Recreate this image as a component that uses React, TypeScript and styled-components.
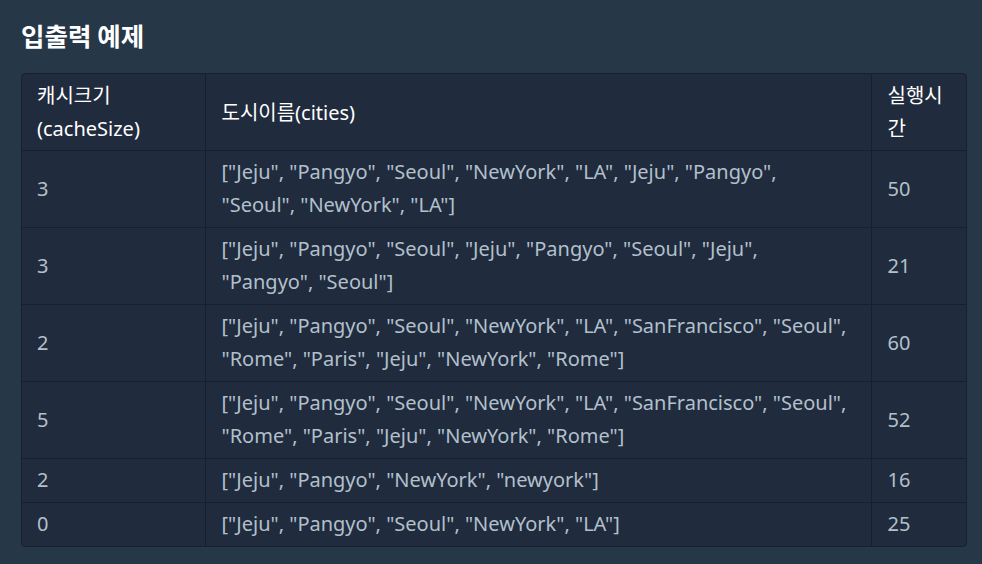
import React from "react";
import styled, { createGlobalStyle } from "styled-components";

const GlobalStyle = createGlobalStyle`
  html, body { margin: 0; padding: 0; background: #263747; }
  body { font-family: "Noto Sans", "Noto Sans CJK KR", sans-serif; }
`;

const Page = styled.div`
  width: 982px;
  height: 564px;
  box-sizing: border-box;
  padding: 16px 15px 0 21px;
  background: #263747;
  overflow: hidden;
`;

const Title = styled.h5`
  margin: 0 0 19px 0;
  font-size: 25.5px;
  line-height: 38px;
  font-weight: 700;
  color: #ffffff;
  font-family: "Noto Sans CJK KR", sans-serif;
`;

const TableWrap = styled.div`
  border: 1px solid #172030;
  border-radius: 4px;
  overflow: hidden;
  background: #202b3d;
`;

const Table = styled.table`
  width: 100%;
  border-collapse: collapse;
  table-layout: fixed;
  font-size: 20px;
  line-height: 33px;
`;

const Col = styled.col<{ $w: number }>`
  width: ${(p) => p.$w}px;
`;

const Th = styled.th`
  text-align: left;
  font-weight: 400;
  color: #ffffff;
  padding: 5px 16px 5px 16px;
  border-right: 1px solid #172030;
  border-bottom: 1px solid #172030;
  vertical-align: middle;
  &:first-child { padding-left: 15px; }
  &:last-child { border-right: none; }
`;

const Td = styled.td`
  color: #b2c0cc;
  padding: 4px 20px 6px 16px;
  border-right: 1px solid #172030;
  border-bottom: 1px solid #172030;
  vertical-align: middle;
  &:first-child { padding-left: 15px; }
  &:last-child { border-right: none; }
`;

const Tr = styled.tr`
  &:last-child td { border-bottom: none; }
`;

const rows: [string, string, string][] = [
  ["3", '["Jeju", "Pangyo", "Seoul", "NewYork", "LA", "Jeju", "Pangyo", "Seoul", "NewYork", "LA"]', "50"],
  ["3", '["Jeju", "Pangyo", "Seoul", "Jeju", "Pangyo", "Seoul", "Jeju", "Pangyo", "Seoul"]', "21"],
  ["2", '["Jeju", "Pangyo", "Seoul", "NewYork", "LA", "SanFrancisco", "Seoul", "Rome", "Paris", "Jeju", "NewYork", "Rome"]', "60"],
  ["5", '["Jeju", "Pangyo", "Seoul", "NewYork", "LA", "SanFrancisco", "Seoul", "Rome", "Paris", "Jeju", "NewYork", "Rome"]', "52"],
  ["2", '["Jeju", "Pangyo", "NewYork", "newyork"]', "16"],
  ["0", '["Jeju", "Pangyo", "Seoul", "NewYork", "LA"]', "25"],
];

export default function App() {
  return (
    <Page>
      <GlobalStyle />
      <Title>입출력 예제</Title>
      <TableWrap>
        <Table>
          <colgroup>
            <Col $w={183} />
            <Col $w={666} />
            <Col $w={97} />
          </colgroup>
          <thead>
            <tr>
              <Th>캐시크기 (cacheSize)</Th>
              <Th>도시이름(cities)</Th>
              <Th>실행시간</Th>
            </tr>
          </thead>
          <tbody>
            {rows.map((r, i) => (
              <Tr key={i}>
                <Td>{r[0]}</Td>
                <Td>{r[1]}</Td>
                <Td>{r[2]}</Td>
              </Tr>
            ))}
          </tbody>
        </Table>
      </TableWrap>
    </Page>
  );
}
